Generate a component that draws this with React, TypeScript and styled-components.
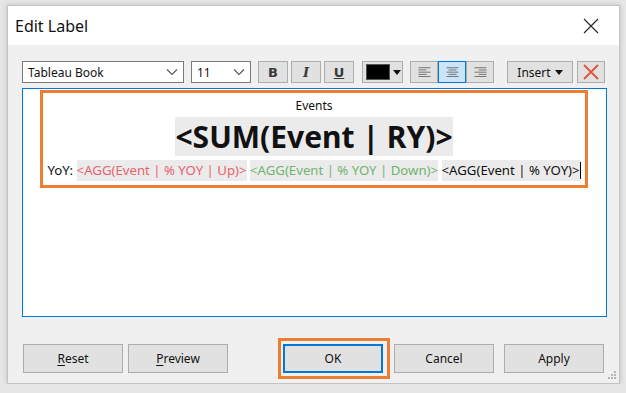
import React from 'react'
import styled, { createGlobalStyle } from 'styled-components'

const GlobalStyle = createGlobalStyle`
    * { box-sizing: border-box; }
    body {
        margin: 0;
        background: #e6e6e6;
        font-family: 'Noto Sans', 'Segoe UI', sans-serif;
    }
`

const uiFont = `'Noto Sans', 'Segoe UI', sans-serif`

const Chevron = () => (
    <svg width="12" height="8" viewBox="0 0 12 8">
        <path d="M1 1.5 L6 6.5 L11 1.5" fill="none" stroke="#555" strokeWidth="1.1" />
    </svg>
)

const Caret = () => (
    <svg width="8" height="5" viewBox="0 0 8 5">
        <path d="M0 0 H8 L4 5 Z" fill="#111" />
    </svg>
)

const AlignIcon = ({ kind }: { kind: 'left' | 'center' | 'right' }) => {
    const rows = [0, 1, 2, 3, 4]
    return (
        <svg width="13" height="11" viewBox="0 0 13 11">
            {rows.map((i) => {
                const width = i % 2 === 0 ? 12 : 8
                const x = kind === 'left' ? 0.5 : kind === 'center' ? (13 - width) / 2 : 12.5 - width
                return <rect key={i} x={x} y={i * 2.2 + 0.3} width={width} height={0.9} fill="#6a6a6a" />
            })}
        </svg>
    )
}

export default function App() {
    return (
        <>
            <GlobalStyle />
            <Window>
                <TitleBar>
                    <Title>Edit Label</Title>
                    <CloseIcon width="16" height="16" viewBox="0 0 16 16">
                        <path d="M1 1 L15 15 M15 1 L1 15" stroke="#222" strokeWidth="1.1" />
                    </CloseIcon>
                </TitleBar>

                <Toolbar>
                    <Select $width={162}>
                        <span>Tableau Book</span>
                        <Chevron />
                    </Select>
                    <Select $width={60}>
                        <span>11</span>
                        <Chevron />
                    </Select>
                    <Group $gap={3}>
                        <ToolButton $width={30}>
                            <StyleGlyph $kind="bold">B</StyleGlyph>
                        </ToolButton>
                        <ToolButton $width={30}>
                            <StyleGlyph $kind="italic">I</StyleGlyph>
                        </ToolButton>
                        <ToolButton $width={30}>
                            <StyleGlyph $kind="underline">U</StyleGlyph>
                        </ToolButton>
                    </Group>
                    <ColorButton>
                        <Swatch />
                        <Caret />
                    </ColorButton>
                    <Group $gap={0}>
                        <ToolButton $width={28}>
                            <AlignIcon kind="left" />
                        </ToolButton>
                        <ToolButton $width={28} $active>
                            <AlignIcon kind="center" />
                        </ToolButton>
                        <ToolButton $width={28}>
                            <AlignIcon kind="right" />
                        </ToolButton>
                    </Group>
                    <InsertButton>
                        Insert
                        <Caret />
                    </InsertButton>
                    <ToolButton $width={28}>
                        <svg width="18" height="18" viewBox="0 0 18 18">
                            <path d="M2 2 L16 16 M16 2 L2 16" stroke="#e0533e" strokeWidth="1.8" />
                        </svg>
                    </ToolButton>
                </Toolbar>

                <Editor>
                    <Highlight>
                        <SmallLine>Events</SmallLine>
                        <BigLine>
                            <Chip>&lt;SUM(Event | RY)&gt;</Chip>
                        </BigLine>
                        <FieldLine>
                            {'YoY: '}
                            <Chip $color="#e8636f">&lt;AGG(Event | % YOY | Up)&gt;</Chip>
                            {' '}
                            <Chip $color="#6fb46f">&lt;AGG(Event | % YOY | Down)&gt;</Chip>
                            {' '}
                            <Chip>&lt;AGG(Event | % YOY)&gt;</Chip>
                            <CaretLine />
                        </FieldLine>
                    </Highlight>
                </Editor>

                <Footer>
                    <DialogButton>
                        <u>R</u>eset
                    </DialogButton>
                    <DialogButton>
                        <u>P</u>review
                    </DialogButton>
                    <Focus>
                        <DialogButton $primary>OK</DialogButton>
                    </Focus>
                    <DialogButton>Cancel</DialogButton>
                    <DialogButton $space={10}>Apply</DialogButton>
                </Footer>

                <Grip width="10" height="10" viewBox="0 0 10 10">
                    <rect x="7" y="0" width="2" height="2" fill="#b5b5b5" />
                    <rect x="4" y="3" width="2" height="2" fill="#b5b5b5" />
                    <rect x="7" y="3" width="2" height="2" fill="#b5b5b5" />
                    <rect x="1" y="6" width="2" height="2" fill="#b5b5b5" />
                    <rect x="4" y="6" width="2" height="2" fill="#b5b5b5" />
                    <rect x="7" y="6" width="2" height="2" fill="#b5b5b5" />
                </Grip>
            </Window>
        </>
    )
}

const Window = styled.div`
    position: relative;
    margin: 5px 0 0 7px;
    width: 613px;
    height: 379px;
    background: #f0f0f0;
    border: 1px solid #c4c4c4;
    box-shadow: 0 0 5px rgba(0, 0, 0, 0.18);
`

const TitleBar = styled.div`
    height: 39px;
    background: #ffffff;
    display: flex;
    align-items: center;
    justify-content: space-between;
    padding: 0 20px 0 7px;
`

const Title = styled.div`
    font-family: ${uiFont};
    font-size: 16px;
    color: #111;
    padding-top: 1px;
`

const CloseIcon = styled.svg`
    display: block;
`

const Toolbar = styled.div`
    display: flex;
    align-items: center;
    height: 22px;
    margin-top: 16px;
    padding-left: 14px;
`

const Select = styled.div<{ $width: number }>`
    width: ${(p) => p.$width}px;
    height: 22px;
    margin-right: 7px;
    background: #fff;
    border: 1px solid #7a7a7a;
    display: flex;
    align-items: center;
    justify-content: space-between;
    padding: 0 5px 0 5px;
    font-family: ${uiFont};
    font-size: 12px;
    color: #111;
`

const Group = styled.div<{ $gap: number }>`
    display: flex;
    gap: ${(p) => p.$gap}px;
    margin-right: 8px;
`

const ToolButton = styled.div<{ $width: number; $active?: boolean }>`
    width: ${(p) => p.$width}px;
    height: 22px;
    display: flex;
    align-items: center;
    justify-content: center;
    background: ${(p) => (p.$active ? '#cce4f7' : '#e1e1e1')};
    border: 1px solid ${(p) => (p.$active ? '#0078d7' : '#adadad')};
`

const StyleGlyph = styled.span<{ $kind: 'bold' | 'italic' | 'underline' }>`
    font-family: 'DejaVu Sans', sans-serif;
    font-size: 13px;
    font-weight: bold;
    color: #3a3a3a;
    font-style: ${(p) => (p.$kind === 'italic' ? 'italic' : 'normal')};
    text-decoration: ${(p) => (p.$kind === 'underline' ? 'underline' : 'none')};
    ${(p) => (p.$kind === 'italic' ? `font-family: 'DejaVu Serif', serif;` : '')}
`

const ColorButton = styled.div`
    width: 41px;
    height: 22px;
    margin-right: 7px;
    display: flex;
    align-items: center;
    gap: 3px;
    padding-left: 3px;
    background: #e1e1e1;
    border: 1px solid #adadad;
`

const Swatch = styled.div`
    width: 24px;
    height: 16px;
    background: #000;
    border: 1px solid #555;
`

const InsertButton = styled.div`
    width: 66px;
    height: 22px;
    margin-left: 5px;
    margin-right: 4px;
    display: flex;
    align-items: center;
    justify-content: center;
    gap: 4px;
    background: #e1e1e1;
    border: 1px solid #adadad;
    font-family: ${uiFont};
    font-size: 12px;
    color: #111;
`

const Editor = styled.div`
    margin: 5px 0 0 14px;
    width: 585px;
    height: 229px;
    background: #fff;
    border: 1px solid #0078d7;
    padding: 1px 0 0 17px;
`

const Highlight = styled.div`
    width: 548px;
    height: 98px;
    border: 3px solid #ed7d31;
    display: flex;
    flex-direction: column;
    align-items: center;
    font-family: ${uiFont};
    color: #111;
`

const SmallLine = styled.div`
    font-size: 12px;
    line-height: 16px;
    margin-top: 5px;
`

const BigLine = styled.div`
    font-size: 30px;
    font-weight: bold;
    line-height: 39px;
    margin-top: 3px;
`

const FieldLine = styled.div`
    white-space: pre;
    font-size: 13.2px;
    line-height: 21px;
    margin-top: 4px;
`

const Chip = styled.span<{ $color?: string }>`
    display: inline-block;
    background: #ebebeb;
    color: ${(p) => p.$color || '#111'};
`

const CaretLine = styled.span`
    display: inline-block;
    width: 1px;
    height: 17px;
    vertical-align: -4px;
    background: #000;
`

const Footer = styled.div`
    display: flex;
    align-items: center;
    margin-top: 21px;
    padding-left: 15px;
    gap: 5px;
`

const Focus = styled.div`
    margin-left: 45px;
    margin-right: -1px;
    padding: 3px 4px 3px 2px;
    border: 3px solid #ed7d31;
`

const DialogButton = styled.div<{ $primary?: boolean; $space?: number }>`
    width: 100px;
    height: 29px;
    ${(p) => (p.$space ? `margin-left: ${p.$space - 5}px;` : '')}
    display: flex;
    align-items: center;
    justify-content: center;
    background: #e1e1e1;
    border: ${(p) => (p.$primary ? '2px solid #0078d7' : '1px solid #adadad')};
    font-family: ${uiFont};
    font-size: 12px;
    color: #111;

    u {
        text-decoration: underline;
        text-underline-offset: 2px;
    }
`

const Grip = styled.svg`
    position: absolute;
    right: 2px;
    bottom: 2px;
`
